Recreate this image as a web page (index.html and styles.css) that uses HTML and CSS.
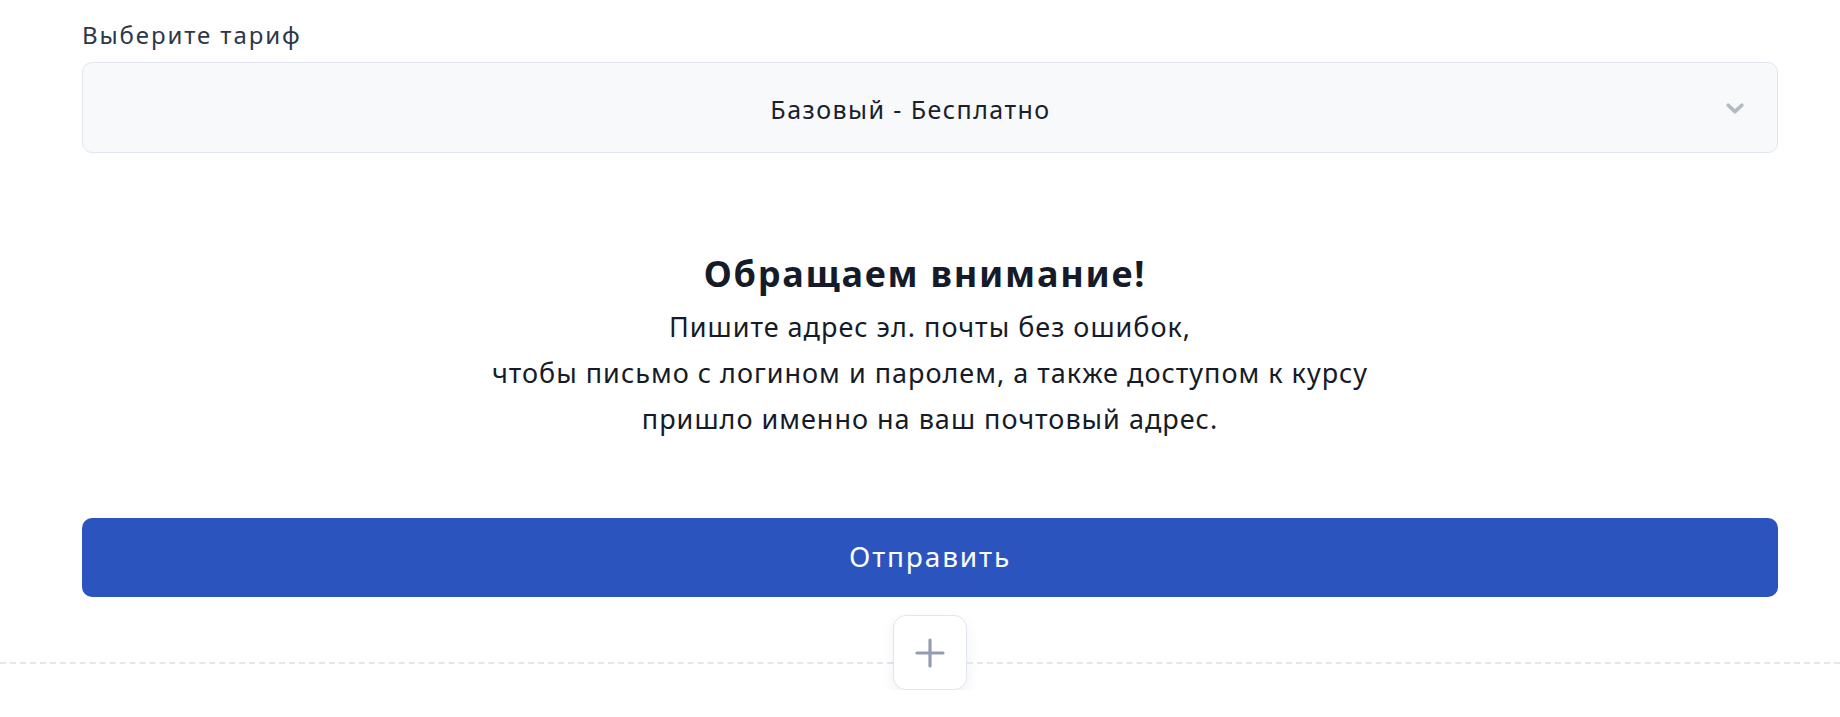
FILE: index.html
```html
<!DOCTYPE html>
<html lang="ru">
<head>
<meta charset="utf-8">
<title>Выберите тариф</title>
<link rel="stylesheet" href="styles.css">
</head>
<body>
<main class="form">
  <label class="label">Выберите тариф</label>
  <div class="select">
    <span class="select-value">Базовый - Бесплатно</span>
    <svg class="chevron" width="18" height="11" viewBox="0 0 18 11" aria-hidden="true">
      <path d="M2.2 2.2 L9 8.6 L15.8 2.2" fill="none" stroke="currentColor" stroke-width="3.6" stroke-linecap="round" stroke-linejoin="round"/>
    </svg>
  </div>
  <section class="notice">
    <h2 class="notice-title">Обращаем внимание!</h2>
    <p class="notice-text">Пишите адрес эл. почты без ошибок,<br>чтобы письмо с логином и паролем, а также доступом к курсу<br>пришло именно на ваш почтовый адрес.</p>
  </section>
  <button class="submit" type="button">Отправить</button>
</main>
<div class="divider">
  <span class="divider-line"></span>
  <button class="add" type="button" aria-label="Добавить">
    <svg width="30" height="30" viewBox="0 0 30 30" aria-hidden="true">
      <path d="M15 2 V28 M2 15 H28" fill="none" stroke="currentColor" stroke-width="3.2" stroke-linecap="round"/>
    </svg>
  </button>
  <span class="divider-line"></span>
</div>
</body>
</html>
```

FILE: styles.css
```css
* { box-sizing: border-box; }

html, body {
  margin: 0;
  background: #ffffff;
}

body {
  font-family: "Noto Sans", "Open Sans", sans-serif;
  color: #1a202c;
}

.form {
  display: flex;
  flex-direction: column;
  padding: 19px 62px 0 82px;
}

.label {
  display: block;
  font-size: 24px;
  line-height: 32px;
  letter-spacing: 1.9px;
  color: #2d3748;
  margin-bottom: 11px;
}

.select {
  position: relative;
  display: flex;
  align-items: center;
  justify-content: center;
  height: 91px;
  padding: 2px 39px 0 0;
  background: #f7f9fb;
  border: 1px solid #e2e6ef;
  border-radius: 10px;
  font-size: 25px;
  letter-spacing: 1.45px;
  color: #1a202c;
}

.chevron {
  position: absolute;
  right: 33px;
  top: 40px;
  color: #b4b9c2;
}

.notice {
  margin-top: 99px;
  text-align: center;
}

.notice-title {
  margin: 0;
  padding-right: 10px;
  font-size: 36px;
  line-height: 44px;
  font-weight: 700;
  letter-spacing: 1.75px;
  color: #151b28;
}

.notice-text {
  margin: 8px 0 0;
  font-size: 27px;
  line-height: 46px;
  letter-spacing: 1px;
  color: #151b28;
}

.submit {
  margin-top: 76px;
  height: 79px;
  padding: 0 0 3px;
  border: 0;
  border-radius: 10px;
  background: #2c54be;
  color: #ffffff;
  font-family: inherit;
  font-size: 28px;
  letter-spacing: 1.85px;
  cursor: pointer;
}

.divider {
  display: grid;
  grid-template-columns: calc(50% - 27px) 74px 1fr;
  align-items: start;
  margin-top: 18px;
}

.divider-line {
  margin-top: 47px;
  border-top: 2px dashed #e2e6ef;
}

.add {
  display: flex;
  align-items: center;
  justify-content: center;
  width: 74px;
  height: 75px;
  padding: 0;
  background: #ffffff;
  border: 1px solid #e2e6ef;
  border-radius: 13px;
  box-shadow: 0 6px 14px rgba(30, 40, 80, 0.07);
  color: #939db2;
  cursor: pointer;
}
```
